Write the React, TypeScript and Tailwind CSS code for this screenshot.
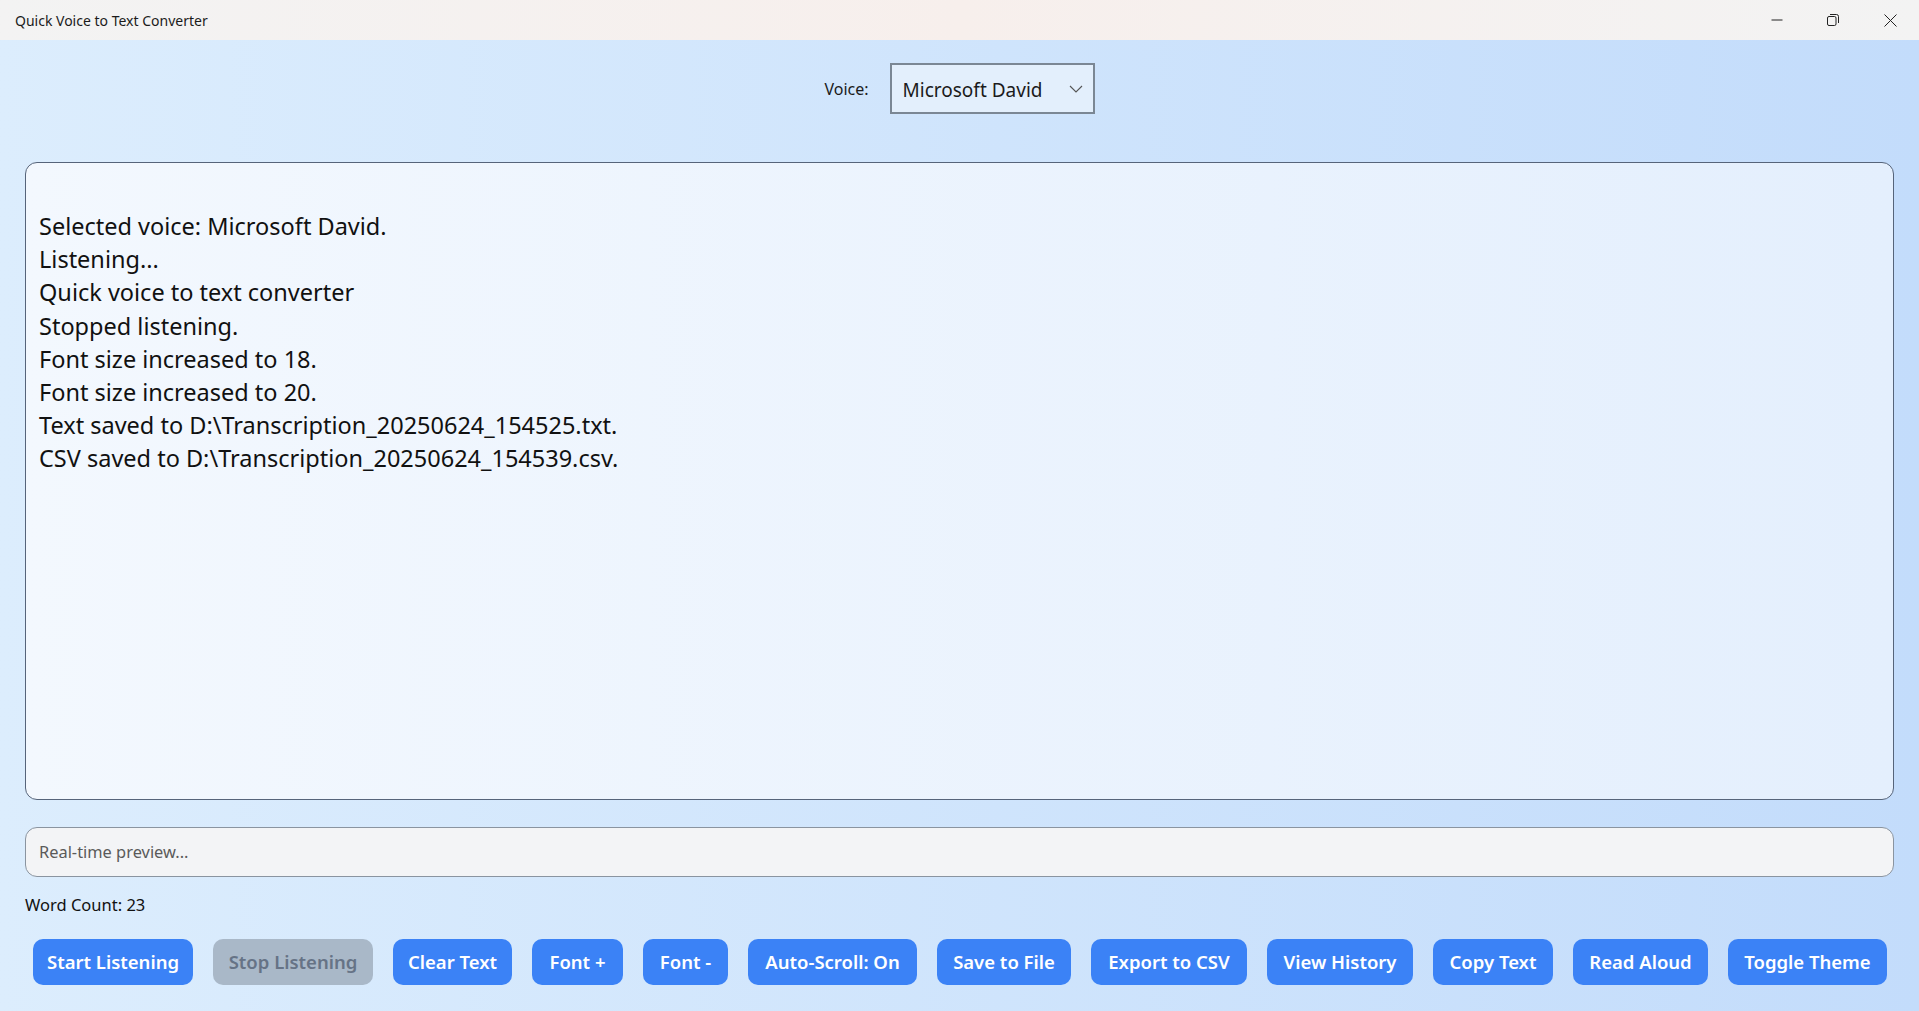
import { useState } from "react";

const lines = [
  "Selected voice: Microsoft David.",
  "Listening...",
  "Quick voice to text converter",
  "Stopped listening.",
  "Font size increased to 18.",
  "Font size increased to 20.",
  "Text saved to D:\\Transcription_20250624_154525.txt.",
  "CSV saved to D:\\Transcription_20250624_154539.csv.",
];

const buttons = [
  { label: "Start Listening", w: "w-[160px]" },
  { label: "Stop Listening", w: "w-[160px]", disabled: true },
  { label: "Clear Text", w: "w-[119px]" },
  { label: "Font +", w: "w-[91px]" },
  { label: "Font -", w: "w-[85px]" },
  { label: "Auto-Scroll: On", w: "w-[169px]" },
  { label: "Save to File", w: "w-[134px]" },
  { label: "Export to CSV", w: "w-[156px]" },
  { label: "View History", w: "w-[146px]" },
  { label: "Copy Text", w: "w-[120px]" },
  { label: "Read Aloud", w: "w-[135px]" },
  { label: "Toggle Theme", w: "w-[159px]" },
];

export default function App() {
  const [voice] = useState("Microsoft David");

  return (
    <div className="h-screen w-full flex flex-col overflow-hidden font-['Noto_Sans','Open_Sans',sans-serif] text-black">
      {/* Title bar */}
      <div className="h-[40px] shrink-0 flex items-center justify-between bg-gradient-to-r from-[#f3f3f3] via-[#f7efec] to-[#f3f3f3]">
        <span className="pl-[15px] text-[14px] text-[#1b1b1b]">Quick Voice to Text Converter</span>
        <div className="flex items-center h-full">
          <button className="w-[56px] h-full flex items-center justify-center">
            <svg width="12" height="12" viewBox="0 0 12 12">
              <path d="M0.5 6h11" stroke="#222" strokeWidth="1" />
            </svg>
          </button>
          <button className="w-[56px] h-full flex items-center justify-center">
            <svg width="12" height="12" viewBox="0 0 12 12" fill="none" stroke="#222" strokeWidth="1">
              <rect x="0.5" y="2.5" width="8.5" height="9" rx="1.5" />
              <path d="M3 0.5h6.5a2 2 0 0 1 2 2V9" />
            </svg>
          </button>
          <button className="w-[58px] h-full flex items-center justify-center">
            <svg width="13" height="13" viewBox="0 0 13 13">
              <path d="M0.5 0.5l12 12M12.5 0.5l-12 12" stroke="#222" strokeWidth="1" />
            </svg>
          </button>
        </div>
      </div>

      {/* Main */}
      <div className="flex-1 flex flex-col bg-gradient-to-r from-[#dcedfd] to-[#c3dcfb] px-[25px]">
        {/* Voice selector */}
        <div className="flex items-center justify-center gap-[21px] pt-[23px]">
          <span className="text-[16px] text-[#1b1b1b]">Voice:</span>
          <div className="w-[205px] h-[51px] border-2 border-[#7b8794] bg-[#e3effc] flex items-center justify-between pl-[11px] pr-[10px]">
            <span className="text-[19px] leading-[26px] pt-[2px] text-[#1b1b1b]">{voice}</span>
            <svg width="14" height="8" viewBox="0 0 14 8" fill="none">
              <path d="M1 1l6 6 6-6" stroke="#555" strokeWidth="1.1" />
            </svg>
          </div>
        </div>

        {/* Transcript */}
        <div className="mt-[48px] h-[638px] rounded-[12px] border border-[#56647a] bg-gradient-to-r from-[#f3f8fe] to-[#e4effd] pt-[47px] pl-[13px]">
          {lines.map((line) => (
            <div key={line} className="text-[23.5px] leading-[33.2px] text-[#111]">
              {line}
            </div>
          ))}
        </div>

        {/* Preview */}
        <div className="mt-[27px] h-[50px] rounded-[12px] border border-[#8a94a0] bg-[#f3f4f6] flex items-center pl-[13px]">
          <span className="text-[16.4px] text-[#5a5a5a]">Real-time preview...</span>
        </div>

        <div className="mt-[17px] text-[16.5px] leading-[22px] text-[#111]">Word Count: 23</div>

        {/* Buttons */}
        <div className="mt-[23px] flex gap-[20px] pl-[8px]">
          {buttons.map((b) => (
            <button
              key={b.label}
              className={`${b.w} h-[46px] rounded-[10px] flex items-center justify-center text-[18.5px] font-semibold ${
                b.disabled ? "bg-[#a9b8c8] text-[#667386]" : "bg-[#3b82f6] text-white"
              }`}
            >
              {b.label}
            </button>
          ))}
        </div>
      </div>
    </div>
  );
}
